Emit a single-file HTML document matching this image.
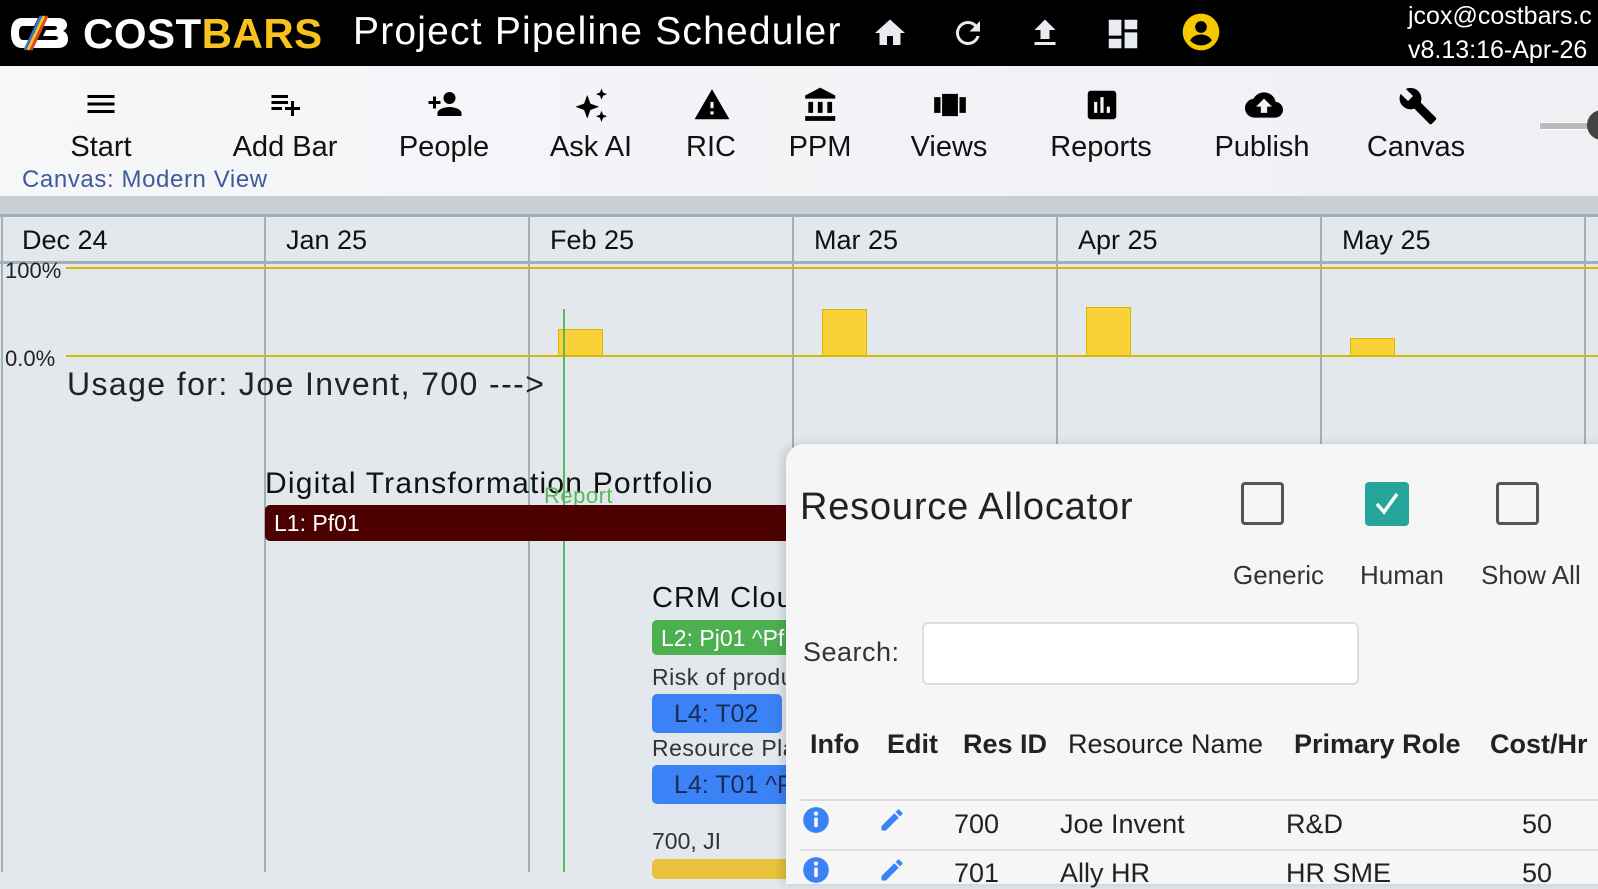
<!DOCTYPE html>
<html><head><meta charset="utf-8">
<style>
*{margin:0;padding:0;box-sizing:border-box}
body{width:1598px;height:872px;overflow:hidden;position:relative;background:#e3e8ed;font-family:"Liberation Sans","DejaVu Sans",sans-serif;color:#111}
.abs{position:absolute;white-space:nowrap}
#top{position:absolute;left:0;top:0;width:1598px;height:66px;background:#000}
#tool{position:absolute;left:0;top:66px;width:1598px;height:130px;background:linear-gradient(90deg,#f6f7f9,#eef0f4);box-shadow:0 2px 6px rgba(0,0,0,.25)}
.ti{position:absolute;top:0;width:160px;margin-left:-80px;text-align:center}
.ti svg{position:absolute;left:62px;top:20px}
.ti span{position:absolute;left:0;width:160px;top:65px;font-size:29px;color:#111}
.vl{position:absolute;top:216px;width:2px;height:656px;background:#9fb0bd}
.mon{position:absolute;top:225px;font-size:27px;color:#111}
</style></head><body>
<div id="top">
 <svg class="abs" style="left:8px;top:14px" width="62" height="38" viewBox="0 0 62 38">
  <path d="M30 4H14C7 4 3 9 3 19s4 15 11 15h10l4-8H15c-3 0-4-3-4-7s1-7 4-7h11z" fill="#fff"/>
  <path d="M36 4h14c6 0 9 3 9 7 0 3-2 5-4 6 3 1 5 4 5 8 0 6-4 9-10 9H24l4-8h19c2 0 3-1 3-2s-1-2-3-2H35l3-6h8c2 0 3-1 3-2s-1-2-3-2H33z" fill="#fff"/>
  <path d="M33 2L17 36" stroke="#3a6fd0" stroke-width="3"/><path d="M36 2L20 36" stroke="#f5c518" stroke-width="3"/><path d="M39 2L23 36" stroke="#e0452b" stroke-width="3"/>
 </svg>
 <div class="abs" style="left:83px;top:10px;font-size:42px;font-weight:bold;color:#fff;letter-spacing:0.5px">COST<span style="color:#f7c11e">BARS</span></div>
 <div class="abs" style="left:353px;top:10px;font-size:39px;color:#fff;letter-spacing:1.2px">Project Pipeline Scheduler</div>
 <svg class="abs" style="left:872px;top:15px" width="36" height="36" viewBox="0 0 24 24"><path d="M10 20v-6h4v6h5v-8h3L12 3 2 12h3v8z" fill="#e8ecf0"/></svg>
 <svg class="abs" style="left:950px;top:15px" width="36" height="36" viewBox="0 0 24 24"><path d="M17.65 6.35A7.958 7.958 0 0 0 12 4a8 8 0 1 0 7.730 10h-2.08A6 6 0 1 1 12 6c1.66 0 3.14.69 4.22 1.78L13 11h7V4z" fill="#e8ecf0"/></svg>
 <svg class="abs" style="left:1027px;top:15px" width="36" height="36" viewBox="0 0 24 24"><path d="M9 16h6v-6h4l-7-7-7 7h4zm-4 2h14v2H5z" fill="#e8ecf0"/></svg>
 <svg class="abs" style="left:1104px;top:15px" width="38" height="38" viewBox="0 0 24 24"><path d="M3 13h8V3H3zm0 8h8v-6H3zm10 0h8V11h-8zm0-18v6h8V3z" fill="#e8ecf0"/></svg>
 <svg class="abs" style="left:1181px;top:12px" width="40" height="40" viewBox="0 0 24 24"><circle cx="12" cy="12" r="11" fill="#f5c800"/><circle cx="12" cy="9" r="3.5" fill="#000"/><path d="M5.5 17c1.5-2.5 4-3.5 6.5-3.5s5 1 6.5 3.5c-1.7 2-4 3-6.5 3s-4.8-1-6.5-3z" fill="#000"/></svg>
 <div class="abs" style="left:1408px;top:2px;font-size:25px;color:#fff">jcox@costbars.c</div>
 <div class="abs" style="left:1408px;top:36px;font-size:25px;color:#fff">v8.13:16-Apr-26</div>
</div>
<div id="tool">
 <div class="ti" style="left:101px"><svg width="36" height="36" viewBox="0 0 24 24"><path d="M3 18h18v-2H3zm0-5h18v-2H3zm0-7v2h18V6z"/></svg><span>Start</span></div>
 <div class="ti" style="left:285px"><svg width="36" height="36" viewBox="0 0 24 24"><path d="M3 6h11v2H3zm0 4h11v2H3zm0 4h7v2H3zm13 0v-4h2v4h4v2h-4v4h-2v-4h-4v-2z"/></svg><span>Add Bar</span></div>
 <div class="ti" style="left:444px"><svg width="38" height="36" viewBox="0 0 24 24"><circle cx="15" cy="8" r="4"/><path d="M15 14c-2.7 0-8 1.300-8 4v2h16v-2c0-2.700-5.300-4-8-4zM6 10V7H4v3H1v2h3v3h2v-3h3v-2z"/></svg><span>People</span></div>
 <div class="ti" style="left:591px"><svg width="38" height="40" viewBox="0 0 24 24"><path d="M9 5l2 5.5 5.5 2-5.5 2L9 20l-2-5.5-5.5-2 5.5-2zM18 1l1 2.5 2.5 1-2.5 1L18 8l-1-2.5-2.5-1 2.5-1zM18 15l1 2.5 2.5 1-2.5 1L18 22l-1-2.5-2.5-1 2.5-1z"/></svg><span>Ask AI</span></div>
 <div class="ti" style="left:711px"><svg width="38" height="38" viewBox="0 0 24 24"><path d="M1 21h22L12 2zm12-3h-2v-2h2zm0-4h-2v-4h2z"/></svg><span>RIC</span></div>
 <div class="ti" style="left:820px"><svg width="38" height="38" viewBox="0 0 24 24"><path d="M4 10v7h3v-7zm6 0v7h3v-7zM2 22h19v-3H2zm14-12v7h3v-7zM11.5 1L2 6v2h19V6z"/></svg><span>PPM</span></div>
 <div class="ti" style="left:949px"><svg width="38" height="38" viewBox="0 0 24 24"><path d="M2 7h4v10H2zm5 12h10V5H7zM18 7h4v10h-4z"/></svg><span>Views</span></div>
 <div class="ti" style="left:1101px"><svg width="38" height="38" viewBox="0 0 24 24"><path d="M19 3H5c-1.1 0-2 .9-2 2v14c0 1.1.9 2 2 2h14c1.1 0 2-.9 2-2V5c0-1.1-.9-2-2-2zM9 17H7v-7h2zm4 0h-2V7h2zm4 0h-2v-4h2z"/></svg><span>Reports</span></div>
 <div class="ti" style="left:1262px"><svg width="40" height="38" viewBox="0 0 24 24"><path d="M19.35 10.04A7.49 7.49 0 0 0 12 4C9.11 4 6.6 5.64 5.35 8.04A5.994 5.994 0 0 0 0 14c0 3.31 2.69 6 6 6h13c2.76 0 5-2.24 5-5 0-2.64-2.05-4.78-4.65-4.96zM14 13v4h-4v-4H7l5-5 5 5z"/></svg><span>Publish</span></div>
 <div class="ti" style="left:1416px"><svg width="40" height="40" viewBox="0 0 24 24"><path d="M22.7 19l-9.1-9.1c.9-2.3.4-5-1.5-6.9-2-2-5-2.4-7.4-1.3L9 6 6 9 1.6 4.7C.4 7.1.9 10.1 2.9 12.1c1.9 1.9 4.6 2.4 6.9 1.5l9.1 9.1c.4.4 1 .4 1.4 0l2.3-2.3c.5-.4.5-1.1.1-1.4z"/></svg><span>Canvas</span></div>
 <div class="abs" style="left:1539px;top:56px;width:60px;height:8px;background:#bbb;border:1px solid #fff"></div>
 <div class="abs" style="left:1587px;top:44px;width:30px;height:30px;border-radius:50%;background:#444"></div>
 <div class="abs" style="left:22px;top:100px;font-size:24px;color:#3f5a9a;letter-spacing:0.6px">Canvas: Modern View</div>
</div>
<div class="abs" style="left:0;top:196px;width:1598px;height:18px;background:#c9cfd5"></div>
<div class="abs" style="left:0;top:214px;width:1598px;height:3px;background:#9fb0bd"></div>
<div class="abs" style="left:0;top:261px;width:1598px;height:3px;background:#9fb0bd"></div>
<div class="vl" style="left:1px"></div>
<div class="vl" style="left:264px"></div><div class="vl" style="left:528px"></div><div class="vl" style="left:792px"></div><div class="vl" style="left:1056px"></div><div class="vl" style="left:1320px"></div><div class="vl" style="left:1584px"></div>
<div class="mon" style="left:22px">Dec 24</div><div class="mon" style="left:286px">Jan 25</div><div class="mon" style="left:550px">Feb 25</div><div class="mon" style="left:814px">Mar 25</div><div class="mon" style="left:1078px">Apr 25</div><div class="mon" style="left:1342px">May 25</div>
<div class="abs" style="left:66px;top:267px;width:1532px;height:2px;background:#d9b800"></div>
<div class="abs" style="left:66px;top:355px;width:1532px;height:2px;background:#d9b800"></div>
<div class="abs" style="left:5px;top:258px;font-size:22px;color:#222">100%</div>
<div class="abs" style="left:5px;top:346px;font-size:22px;color:#222">0.0%</div>
<div class="abs" style="left:558px;top:329px;width:45px;height:27px;background:#f9d23a;border:1px solid #d9b800"></div>
<div class="abs" style="left:822px;top:309px;width:45px;height:47px;background:#f9d23a;border:1px solid #d9b800"></div>
<div class="abs" style="left:1086px;top:307px;width:45px;height:49px;background:#f9d23a;border:1px solid #d9b800"></div>
<div class="abs" style="left:1350px;top:338px;width:45px;height:18px;background:#f9d23a;border:1px solid #d9b800"></div>
<div class="abs" style="left:563px;top:309px;width:2px;height:563px;background:#5cb85c"></div>
<div class="abs" style="left:67px;top:366px;font-size:32px;color:#222;letter-spacing:1.4px">Usage for: Joe Invent, 700 ---&gt;</div>
<div class="abs" style="left:265px;top:467px;font-size:30px;color:#111;letter-spacing:1.2px">Digital Transformation Portfolio</div>
<div class="abs" style="left:544px;top:483px;font-size:22px;color:#5cb85c;letter-spacing:0.5px">Report</div>
<div class="abs" style="left:265px;top:505px;width:540px;height:36px;background:#4d0000;border-radius:5px;color:#fff;font-size:23px;padding:5px 0 0 9px">L1: Pf01</div>
<div class="abs" style="left:652px;top:582px;font-size:29px;color:#111;letter-spacing:1px">CRM Cloud</div>
<div class="abs" style="left:652px;top:620px;width:160px;height:35px;background:#4caf50;border-radius:5px;color:#fff;font-size:23px;padding:5px 0 0 9px">L2: Pj01 ^Pf</div>
<div class="abs" style="left:652px;top:664px;font-size:23px;color:#333;letter-spacing:0.5px">Risk of production</div>
<div class="abs" style="left:652px;top:694px;width:130px;height:39px;background:#3b82f6;border-radius:5px;color:#1a2a55;font-size:25px;padding:6px 0 0 22px">L4: T02</div>
<div class="abs" style="left:652px;top:735px;font-size:23px;color:#333;letter-spacing:0.5px">Resource Plan</div>
<div class="abs" style="left:652px;top:765px;width:160px;height:39px;background:#3b82f6;border-radius:5px;color:#1a2a55;font-size:25px;padding:6px 0 0 22px">L4: T01 ^P</div>
<div class="abs" style="left:652px;top:828px;font-size:23px;color:#333">700, JI</div>
<div class="abs" style="left:652px;top:859px;width:160px;height:20px;background:#e7c23a;border-radius:5px"></div>

<div class="abs" style="left:786px;top:444px;width:830px;height:440px;background:#f6f6f6;border-radius:18px 0 0 0;box-shadow:-3px 0 10px rgba(0,0,0,.15)">
 <div class="abs" style="left:14px;top:42px;font-size:38px;color:#222;letter-spacing:0.8px">Resource Allocator</div>
 <div class="abs" style="left:455px;top:38px;width:43px;height:43px;border:3px solid #555;border-radius:4px"></div>
 <div class="abs" style="left:579px;top:38px;width:44px;height:44px;background:#26a69a;border-radius:4px"><svg width="44" height="44" viewBox="0 0 44 44"><path d="M12 22l7 8 13-18" stroke="#fff" stroke-width="3.5" fill="none"/></svg></div>
 <div class="abs" style="left:710px;top:38px;width:43px;height:43px;border:3px solid #555;border-radius:4px"></div>
 <div class="abs" style="left:447px;top:116px;font-size:26px;color:#333">Generic</div>
 <div class="abs" style="left:574px;top:116px;font-size:26px;color:#333">Human</div>
 <div class="abs" style="left:695px;top:116px;font-size:26px;color:#333">Show All</div>
 <div class="abs" style="left:17px;top:193px;font-size:27px;color:#333;letter-spacing:0.5px">Search:</div>
 <div class="abs" style="left:136px;top:178px;width:437px;height:63px;background:#fff;border:2px solid #ddd;border-radius:6px"></div>
 <div class="abs" style="left:24px;top:285px;font-size:27px;font-weight:bold;color:#222">Info</div>
 <div class="abs" style="left:101px;top:285px;font-size:27px;font-weight:bold;color:#222">Edit</div>
 <div class="abs" style="left:177px;top:285px;font-size:27px;font-weight:bold;color:#222">Res ID</div>
 <div class="abs" style="left:282px;top:285px;font-size:27px;color:#222">Resource Name</div>
 <div class="abs" style="left:508px;top:285px;font-size:27px;font-weight:bold;color:#222">Primary Role</div>
 <div class="abs" style="left:704px;top:285px;font-size:27px;font-weight:bold;color:#222">Cost/Hr</div>
 <div class="abs" style="left:14px;top:355px;width:830px;height:2px;background:#ddd"></div>
 <svg class="abs" style="left:16px;top:362px" width="28" height="28" viewBox="0 0 24 24"><circle cx="12" cy="12" r="11" fill="#3b82f6"/><rect x="10.5" y="10" width="3" height="8" fill="#fff"/><circle cx="12" cy="6.5" r="1.8" fill="#fff"/></svg>
 <svg class="abs" style="left:92px;top:362px" width="28" height="28" viewBox="0 0 24 24"><path d="M3 17.25V21h3.75L17.81 9.940l-3.75-3.75zM20.71 7.04a1 1 0 0 0 0-1.41l-2.34-2.34a1 1 0 0 0-1.41 0l-1.83 1.83 3.75 3.75z" fill="#3b82f6"/></svg>
 <div class="abs" style="left:168px;top:365px;font-size:27px;color:#222">700</div>
 <div class="abs" style="left:274px;top:365px;font-size:27px;color:#222">Joe Invent</div>
 <div class="abs" style="left:500px;top:365px;font-size:27px;color:#222">R&amp;D</div>
 <div class="abs" style="left:736px;top:365px;font-size:27px;color:#222">50</div>
 <div class="abs" style="left:14px;top:405px;width:830px;height:2px;background:#ddd"></div>
 <svg class="abs" style="left:16px;top:412px" width="28" height="28" viewBox="0 0 24 24"><circle cx="12" cy="12" r="11" fill="#3b82f6"/><rect x="10.5" y="10" width="3" height="8" fill="#fff"/><circle cx="12" cy="6.5" r="1.8" fill="#fff"/></svg>
 <svg class="abs" style="left:92px;top:412px" width="28" height="28" viewBox="0 0 24 24"><path d="M3 17.25V21h3.75L17.81 9.94l-3.75-3.75zM20.71 7.04a1 1 0 0 0 0-1.41l-2.34-2.34a1 1 0 0 0-1.41 0l-1.83 1.83 3.75 3.75z" fill="#3b82f6"/></svg>
 <div class="abs" style="left:168px;top:414px;font-size:27px;color:#222">701</div>
 <div class="abs" style="left:274px;top:414px;font-size:27px;color:#222">Ally HR</div>
 <div class="abs" style="left:500px;top:414px;font-size:27px;color:#222">HR SME</div>
 <div class="abs" style="left:736px;top:414px;font-size:27px;color:#222">50</div>
</div>
</body></html>
